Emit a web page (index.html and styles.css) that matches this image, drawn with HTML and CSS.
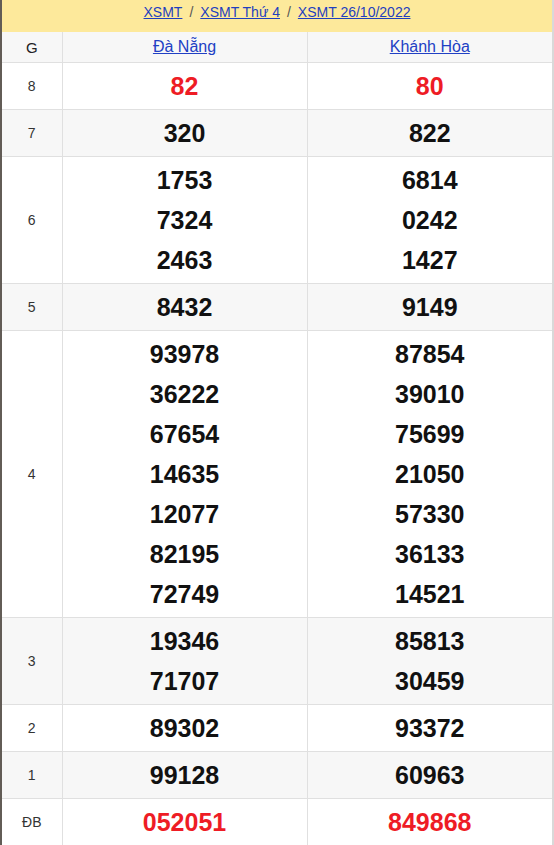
FILE: index.html
```html
<!DOCTYPE html>
<html lang="vi">
<head>
<meta charset="utf-8">
<link rel="stylesheet" href="styles.css">
</head>
<body>
<div class="page">
  <div class="crumbs">
    <a href="#">XSMT</a><span class="sep">/</span><a href="#">XSMT Thứ 4</a><span class="sep">/</span><a href="#">XSMT 26/10/2022</a>
  </div>
  <table class="results">
    <colgroup><col class="c-g"><col class="c-p"><col class="c-p"></colgroup>
    <thead>
      <tr><th>G</th><th><a href="#">Đà Nẵng</a></th><th><a href="#">Khánh Hòa</a></th></tr>
    </thead>
    <tbody>
      <tr><td class="g">8</td><td class="n red"><div>82</div></td><td class="n red"><div>80</div></td></tr>
      <tr class="alt"><td class="g">7</td><td class="n"><div>320</div></td><td class="n"><div>822</div></td></tr>
      <tr><td class="g">6</td><td class="n"><div>1753</div><div>7324</div><div>2463</div></td><td class="n"><div>6814</div><div>0242</div><div>1427</div></td></tr>
      <tr class="alt"><td class="g">5</td><td class="n"><div>8432</div></td><td class="n"><div>9149</div></td></tr>
      <tr><td class="g">4</td><td class="n"><div>93978</div><div>36222</div><div>67654</div><div>14635</div><div>12077</div><div>82195</div><div>72749</div></td><td class="n"><div>87854</div><div>39010</div><div>75699</div><div>21050</div><div>57330</div><div>36133</div><div>14521</div></td></tr>
      <tr class="alt"><td class="g">3</td><td class="n"><div>19346</div><div>71707</div></td><td class="n"><div>85813</div><div>30459</div></td></tr>
      <tr><td class="g">2</td><td class="n"><div>89302</div></td><td class="n"><div>93372</div></td></tr>
      <tr class="alt"><td class="g">1</td><td class="n"><div>99128</div></td><td class="n"><div>60963</div></td></tr>
      <tr><td class="g">ĐB</td><td class="n red"><div>052051</div></td><td class="n red"><div>849868</div></td></tr>
    </tbody>
  </table>
</div>
</body>
</html>
```
FILE: styles.css
```css
html, body { margin: 0; padding: 0; background: #fff; }
body { font-family: "Liberation Sans", Arial, sans-serif; color: #222; }
.page {
  width: 550px;
  border-left: 2px solid #625c56;
  border-right: 2px solid #d9d9d9;
  height: 845px;
  overflow: hidden;
}
.crumbs {
  background: #fde99b;
  height: 32px;
  display: flex;
  align-items: flex-start;
  justify-content: center;
  font-size: 14px;
  line-height: 16px;
  color: #555;
  box-sizing: border-box;
  padding-top: 4px;
}
.crumbs a { color: #1f3fbf; text-decoration: underline; }
.crumbs .sep { margin: 0 7px; color: #555; }
.results {
  width: 550px;
  border-collapse: collapse;
  table-layout: fixed;
}
.c-g { width: 60px; }
.results th, .results td {
  border: 1px solid #e0e0e0;
  text-align: center;
  vertical-align: middle;
}
.results tr > :first-child { border-left: none; }
.results tr > :last-child { border-right: none; }
.results thead th {
  background: #f7f7f7;
  height: 30px;
  padding: 0;
  font-weight: normal;
  font-size: 16px;
  color: #222;
  border-top: none;
}
.results thead th:first-child { font-size: 15px; }
.results thead th a { color: #2140c4; text-decoration: underline; }
.results tbody tr.alt td { background: #f7f7f7; }
.results td.g { font-size: 14px; color: #333; padding: 0; }
.results td.n {
  padding: 3px 0;
  font-size: 25px;
  font-weight: bold;
  color: #111;
  line-height: 40px;
}
.results td.red { color: #ee1c25; }
```
